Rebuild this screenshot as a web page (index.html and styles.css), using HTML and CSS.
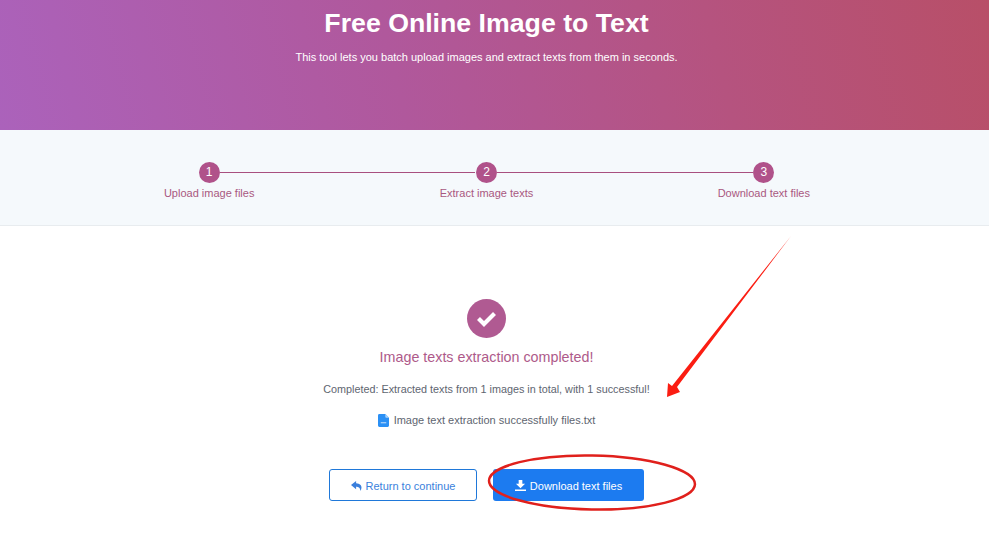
FILE: index.html
```html
<!DOCTYPE html>
<html lang="en">
<head>
<meta charset="utf-8">
<title>Free Online Image to Text</title>
<link rel="stylesheet" href="styles.css">
</head>
<body>
<header class="hero">
  <h1 class="hero-title">Free Online Image to Text</h1>
  <p class="hero-sub">This tool lets you batch upload images and extract texts from them in seconds.</p>
</header>
<section class="steps-band">
  <ol class="steps">
    <li class="step"><span class="step-num">1</span><span class="step-label">Upload image files</span></li>
    <li class="step"><span class="step-num">2</span><span class="step-label">Extract image texts</span></li>
    <li class="step"><span class="step-num">3</span><span class="step-label">Download text files</span></li>
  </ol>
</section>
<main class="result">
  <svg class="check" viewBox="0 0 39 39" aria-hidden="true">
    <circle cx="19.5" cy="19.5" r="19.5" fill="#b05a92"/>
    <path d="M11.5 19.5l5.5 5.500 10.500-10.500" fill="none" stroke="#fff" stroke-width="4.200"/>
  </svg>
  <h2 class="result-title">Image texts extraction completed!</h2>
  <p class="result-text">Completed: Extracted texts from 1 images in total, with 1 successful!</p>
  <p class="file">
    <svg class="file-icon" viewBox="0 0 12 14" aria-hidden="true">
      <path d="M1.5 0H8l4 4v8.500a1.500 1.500 0 0 1-1.500 1.500h-9A1.500 1.500 0 0 1 0 12.500v-11A1.500 1.500 0 0 1 1.500 0z" fill="#2b90f5"/>
      <path d="M8 0l4 4H9a1 1 0 0 1-1-1z" fill="#a9d3fb"/>
      <path d="M3 9h6v1H3z" fill="#d5e9fd"/>
    </svg>
    <span>Image text extraction successfully files.txt</span>
  </p>
  <div class="actions">
    <a class="btn btn-outline" href="#">
      <svg class="btn-icon btn-icon-reply" viewBox="0 0 14 13" aria-hidden="true"><path d="M6.500 0L0 5.200l6.500 5.300V7.400c3 0 5 .7 5.500 5.600 2.500-4.500 2-9.500-5.500-10z" fill="currentColor"/></svg>
      Return to continue
    </a>
    <a class="btn btn-solid" href="#">
      <svg class="btn-icon" viewBox="0 0 12 12" aria-hidden="true"><path d="M4 0h4v4h3L6 9 1 4h3zM0 10.300h12V12H0z" fill="currentColor"/></svg>
      Download text files
    </a>
  </div>
</main>
<svg class="annotation" viewBox="0 0 989 542" aria-hidden="true">
  <path d="M791 236L677 387 680 392 667 397 668 383 672 386z" fill="#fb1d12"/>
  <ellipse cx="592" cy="482.500" rx="103" ry="27" fill="none" stroke="#e0201c" stroke-width="2.500" transform="rotate(1 592 482)"/>
</svg>
</body>
</html>
```
FILE: styles.css
```css
* { box-sizing: border-box; }
html, body { margin: 0; padding: 0; }
body {
  position: relative;
  height: 542px;
  overflow: hidden;
  background: #fff;
  font-family: "Liberation Sans", sans-serif;
}
.hero {
  height: 130px;
  padding-right: 16px;
  background: linear-gradient(76deg, #ab62bb 0%, #b0589c 40%, #b5537f 72%, #b84f68 100%);
  color: #fff;
  text-align: center;
}
.hero-title {
  margin: 0;
  padding-top: 6px;
  font-size: 26.700px;
  line-height: 34px;
  font-weight: 700;
}
.hero-sub {
  margin: 10px 0 0;
  font-size: 11px;
  line-height: 14px;
}
.steps-band {
  height: 96px;
  padding-right: 16px;
  background: #f5f9fc;
  border-bottom: 1px solid #e8ecef;
}
.steps {
  list-style: none;
  margin: 0 auto;
  padding: 32px 0 0;
  width: 832px;
  display: grid;
  grid-template-columns: repeat(3, 1fr);
}
.step {
  position: relative;
  display: flex;
  flex-direction: column;
  align-items: center;
  gap: 3px;
}
.step:not(:last-child)::after {
  content: "";
  position: absolute;
  top: 10px;
  left: calc(50% + 11px);
  width: calc(100% - 22px);
  height: 1px;
  background: #a84f7f;
}
.step-num {
  width: 21px;
  height: 21px;
  border-radius: 50%;
  background: #b0528a;
  color: #fff;
  font-size: 12px;
  line-height: 21px;
  text-align: center;
}
.step-label {
  color: #a9587f;
  font-size: 11px;
  line-height: 14px;
}
.result {
  padding: 73px 16px 0 0;
  display: flex;
  flex-direction: column;
  align-items: center;
}
.check { width: 39px; height: 39px; display: block; }
.result-title {
  margin: 10px 0 0;
  color: #ae5a8a;
  font-size: 14.300px;
  line-height: 18px;
  font-weight: 400;
}
.result-text {
  margin: 16px 0 0;
  color: #5e6570;
  font-size: 10.800px;
  line-height: 14px;
}
.file {
  margin: 17px 0 0;
  display: flex;
  align-items: center;
  gap: 5px;
  color: #5e6570;
  font-size: 11px;
  line-height: 14px;
}
.file-icon { width: 11px; height: 13px; }
.actions {
  margin-top: 42px;
  display: flex;
  gap: 16px;
}
.btn {
  height: 32px;
  padding-top: 1px;
  border-radius: 3px;
  display: flex;
  align-items: center;
  justify-content: center;
  gap: 4px;
  font-size: 11px;
  text-decoration: none;
}
.btn-icon { width: 11px; height: 11px; }
.btn-icon-reply { height: 12px; }
.btn-outline {
  width: 148px;
  border: 1px solid #1f78d9;
  color: #3a7fdc;
  background: #fff;
}
.btn-solid {
  width: 151px;
  background: #1c7bf0;
  color: #fff;
}
.annotation {
  position: absolute;
  left: 0;
  top: 0;
  width: 989px;
  height: 542px;
  pointer-events: none;
}
```
